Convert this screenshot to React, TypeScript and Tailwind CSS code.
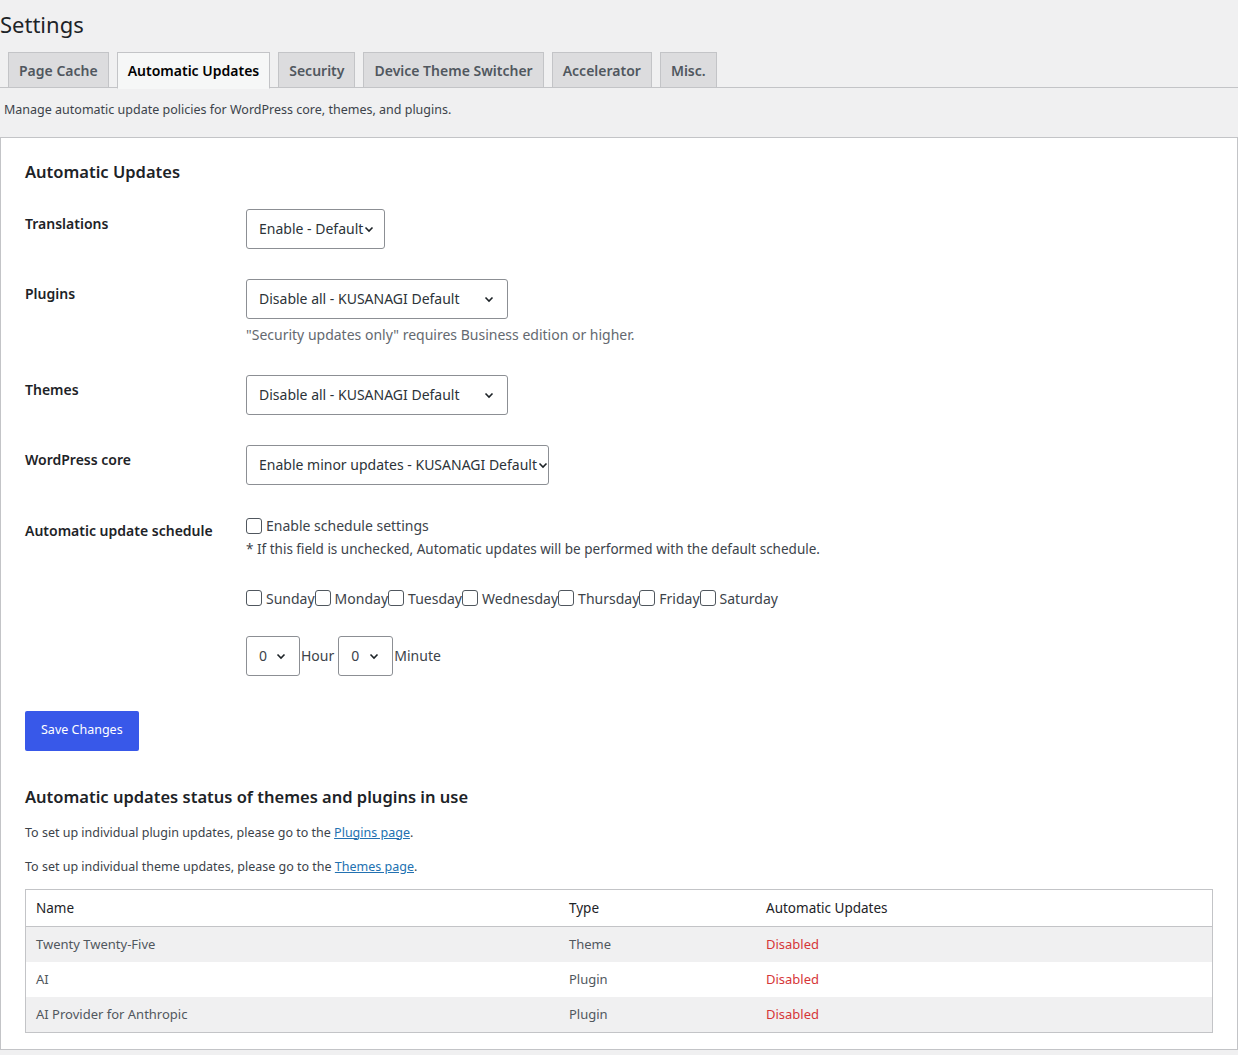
import React from "react";

const Chev = () => (
  <svg width="12" height="12" viewBox="0 0 12 12" className="shrink-0"><path d="M2.5 4.5 6 8l3.5-3.5" fill="none" stroke="#1d2327" strokeWidth="1.6" /></svg>
);

function Select({ text, w }: { text: string; w: string }) {
  return (
    <div className={`h-10 ${w} border border-[#8c8f94] rounded-[3px] bg-white flex items-center justify-between pl-3 pr-3 text-[14px] text-[#2c3338]`}>
      <span className="whitespace-nowrap">{text}</span>
      <Chev />
    </div>
  );
}

function Row({ label, children, top = "pt-[14px]" }: { label: string; children: React.ReactNode; top?: string }) {
  return (
    <div className="flex">
      <div className={`w-[221px] shrink-0 text-[14px] font-semibold text-[#1d2327] ${top}`}>{label}</div>
      <div className="flex-1">{children}</div>
    </div>
  );
}

const Box = () => <span className="inline-block w-4 h-4 border border-[#50575e] rounded-[3px] bg-white mr-1 shrink-0" />;

export default function App() {
  const tabs = ["Page Cache", "Automatic Updates", "Security", "Device Theme Switcher", "Accelerator", "Misc."];
  const days = ["Sunday", "Monday", "Tuesday", "Wednesday", "Thursday", "Friday", "Saturday"];
  const rows = [["Twenty Twenty-Five", "Theme"], ["AI", "Plugin"], ["AI Provider for Anthropic", "Plugin"]];
  return (
    <div className="min-h-[1055px] bg-[#f0f0f1] text-[#3c434a]" style={{ fontFamily: '"Noto Sans", sans-serif' }}>
      <h1 className="text-[22px] font-normal text-[#1d2327] pt-[9px] leading-[30px] m-0">Settings</h1>
      <div className="flex gap-[8px] pl-[8px] mt-[13px] border-b border-[#c3c4c7] h-[36px]">
        {tabs.map((t, i) => (
          <div key={t} className={`px-[10px] h-[36px] flex items-center text-[14px] font-semibold border border-[#c3c4c7] ${i === 1 ? "bg-[#f6f7f7] text-[#000] border-b-[#f6f7f7] h-[37px]" : "bg-[#dcdcde] text-[#50575e]"}`}>{t}</div>
        ))}
      </div>
      <p className="text-[12.5px] pl-[4px] pt-[13px] pb-[17px] m-0">Manage automatic update policies for WordPress core, themes, and plugins.</p>
      <div className="bg-white border border-[#c3c4c7] px-[24px] pt-[22px] pb-[16px]">
        <h2 className="text-[16.5px] font-semibold text-[#1d2327] m-0 mb-[24px]">Automatic Updates</h2>
        <div className="flex flex-col gap-[30px]">
          <Row label="Translations" top="pt-[4px]"><Select text="Enable - Default" w="w-[139px]" /></Row>
          <Row label="Plugins" top="pt-[4px]">
            <Select text="Disable all - KUSANAGI Default" w="w-[262px]" />
            <p className="text-[14px] text-[#646970] mt-[5px] m-0">"Security updates only" requires Business edition or higher.</p>
          </Row>
          <Row label="Themes" top="pt-[4px]"><Select text="Disable all - KUSANAGI Default" w="w-[262px]" /></Row>
          <Row label="WordPress core" top="pt-[4px]"><Select text="Enable minor updates - KUSANAGI Default" w="w-[303px]" /></Row>
          <Row label="Automatic update schedule" top="pt-[5px]">
            <label className="flex items-center text-[14px] h-[22px]"><Box />Enable schedule settings</label>
            <p className="text-[13.5px] m-0 mt-[2px]">* If this field is unchecked, Automatic updates will be performed with the default schedule.</p>
            <div className="flex items-center text-[14px] mt-[29px]">
              {days.map(d => <span key={d} className="flex items-center"><Box />{d}</span>)}
            </div>
            <div className="flex items-start text-[14px] mt-[27px] gap-[1px]">
              <div className="h-10 w-[54px] border border-[#8c8f94] rounded-[3px] flex items-center justify-between px-3"><span>0</span><Chev /></div>
              <span className="mt-[9px] mr-[3px]">Hour</span>
              <div className="h-10 w-[55px] border border-[#8c8f94] rounded-[3px] flex items-center justify-between px-3"><span>0</span><Chev /></div>
              <span className="mt-[9px]">Minute</span>
            </div>
          </Row>
        </div>
        <button className="mt-[35px] bg-[#3858e9] text-white text-[12.5px] h-10 px-[16px] rounded-[2px]">Save Changes</button>
        <h2 className="text-[16.5px] font-semibold text-[#1d2327] m-0 mt-[34px]">Automatic updates status of themes and plugins in use</h2>
        <p className="text-[12.5px] mt-[14px] m-0">To set up individual plugin updates, please go to the <a className="text-[#2271b1] underline">Plugins page</a>.</p>
        <p className="text-[12.5px] mt-[16px] m-0">To set up individual theme updates, please go to the <a className="text-[#2271b1] underline">Themes page</a>.</p>
        <div className="mt-[12px] border border-[#c3c4c7] text-[13px]">
          <div className="flex h-[37px] items-center border-b border-[#c3c4c7] text-[13.5px] text-[#1d2327]">
            <div className="w-[543px] pl-[10px]">Name</div><div className="w-[197px]">Type</div><div>Automatic Updates</div>
          </div>
          {rows.map((r, i) => (
            <div key={i} className={`flex h-[35px] items-center ${i % 2 === 0 ? "bg-[#f0f0f1]" : "bg-white"} text-[#50575e]`}>
              <div className="w-[543px] pl-[10px]">{r[0]}</div><div className="w-[197px]">{r[1]}</div><div className="text-[#d63638]">Disabled</div>
            </div>
          ))}
        </div>
      </div>
    </div>
  );
}
